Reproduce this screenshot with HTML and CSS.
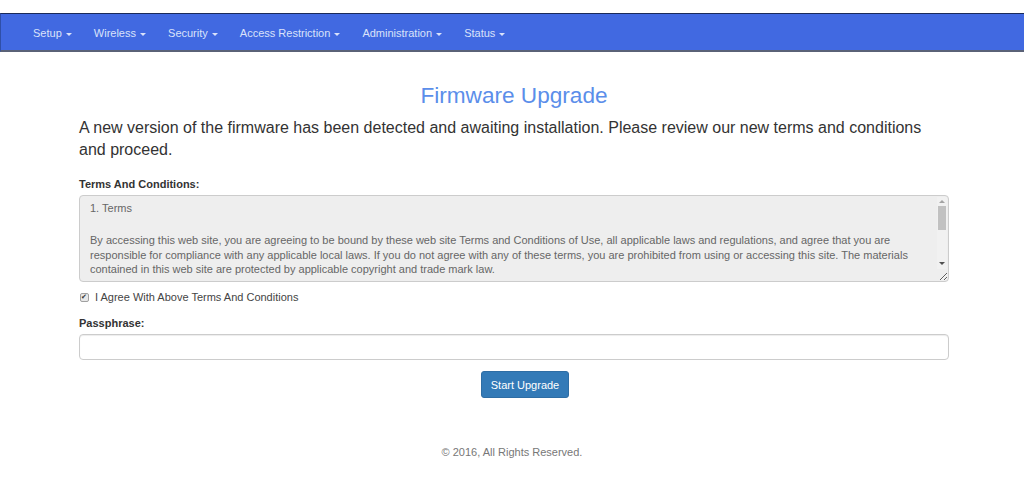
FILE: index.html
```html
<!DOCTYPE html>
<html lang="en">
<head>
    <meta charset="UTF-8">
    <title>Firmware Upgrade</title>
    <link rel="stylesheet" href="styles.css">
</head>
<body>
    <nav class="navbar">
        <ul class="nav">
            <li><a href="#">Setup <span class="caret"></span></a></li>
            <li><a href="#">Wireless <span class="caret"></span></a></li>
            <li><a href="#">Security <span class="caret"></span></a></li>
            <li><a href="#">Access Restriction <span class="caret"></span></a></li>
            <li><a href="#">Administration <span class="caret"></span></a></li>
            <li><a href="#">Status <span class="caret"></span></a></li>
        </ul>
    </nav>

    <div class="container">
        <h1 class="title">Firmware Upgrade</h1>
        <p class="lead">A new version of the firmware has been detected and awaiting installation. Please review our new terms and conditions and proceed.</p>

        <form class="upgrade-form">
            <label class="field-label">Terms And Conditions:</label>
            <div class="terms-box">
                <div class="terms">
                    <p class="terms-heading">1. Terms</p>
                    <p>By accessing this web site, you are agreeing to be bound by these web site Terms and Conditions of Use, all applicable laws and regulations, and agree that you are responsible for compliance with any applicable local laws. If you do not agree with any of these terms, you are prohibited from using or accessing this site. The materials contained in this web site are protected by applicable copyright and trade mark law.</p>
                </div>
                <!-- scrollbar drawn over the terms box -->
                <div class="scrollbar">
                    <span class="arrow-up"></span>
                    <span class="thumb"></span>
                    <span class="arrow-down"></span>
                </div>
            </div>

            <label class="agree">
                <input type="checkbox" checked> I Agree With Above Terms And Conditions
            </label>

            <label class="field-label" for="passphrase">Passphrase:</label>
            <input type="password" id="passphrase" class="form-control">

            <div class="actions">
                <button type="submit" class="btn-primary">Start Upgrade</button>
            </div>
        </form>
    </div>

    <footer class="footer">&copy; 2016, All Rights Reserved.</footer>
</body>
</html>
```

FILE: styles.css
```css
body {
    font-family: "Liberation Sans", Arial, sans-serif;
    font-size: 11px;
    color: #333;
    background-color: #fff;
    margin: 0;
    padding-top: 13px;
}
.navbar {
    background-color: #4169e1;
    border-top: 1px solid #1a2a5a;
    border-bottom: 2px solid #5a6277;
    border-left: 1px solid #2f4fa8;
    height: 36px;
}
.nav {
    list-style: none;
    margin: 0;
    padding: 0 0 0 21px;
    display: flex;
}
.nav a {
    display: block;
    padding: 13px 11px 11px;
    font-size: 11px;
    line-height: 12px;
    color: #dae2fa;
    text-decoration: none;
}
.caret {
    display: inline-block;
    width: 0;
    height: 0;
    margin-left: 1px;
    vertical-align: middle;
    border-top: 3px solid #dae2fa;
    border-left: 3px solid transparent;
    border-right: 3px solid transparent;
}
.container {
    width: 870px;
    margin: 0 0 0 79px;
}
.title {
    font-size: 22.6px;
    font-weight: normal;
    color: #5b8eea;
    text-align: center;
    margin: 31px 0 8px;
    line-height: 26px;
}
.lead {
    font-size: 16px;
    line-height: 22px;
    margin: 0 0 17px;
}
.upgrade-form {
    display: flex;
    flex-direction: column;
}
.field-label {
    font-weight: bold;
    font-size: 11px;
    margin-bottom: 5px;
}
.terms-box {
    position: relative;
    display: flex;
}
.terms {
    flex: 1;
    box-sizing: border-box;
    height: 87px;
    padding: 5px 22px 0 10px;
    font-size: 11px;
    line-height: 14.5px;
    color: #666;
    background-color: #eee;
    border: 1px solid #ccc;
    border-radius: 4px;
    overflow: hidden;
    resize: vertical;
}
.terms p {
    margin: 0;
}
.terms .terms-heading {
    margin-bottom: 17.5px;
}
.scrollbar {
    position: absolute;
    top: 2px;
    right: 2px;
    width: 10px;
    height: 72px;
    background-color: #f1f1f1;
}
.arrow-up,
.arrow-down {
    position: absolute;
    left: 2px;
    width: 0;
    height: 0;
    border-left: 3px solid transparent;
    border-right: 3px solid transparent;
}
.arrow-up {
    top: 3px;
    border-bottom: 3px solid #a3a3a3;
}
.arrow-down {
    bottom: 4px;
    border-top: 3px solid #505050;
}
.thumb {
    position: absolute;
    top: 9px;
    left: 1px;
    width: 8px;
    height: 24px;
    background-color: #c1c1c1;
}
.agree {
    display: flex;
    align-items: center;
    margin: 9px 0 14px 1px;
    color: #444;
}
.agree input {
    appearance: none;
    position: relative;
    box-sizing: border-box;
    width: 9px;
    height: 9px;
    margin: 0 6px 0 0;
    background-color: #e8e8e8;
    border: 1px solid #a0a0a0;
    border-radius: 2px;
}
.agree input:checked::after {
    content: "\2714";
    position: absolute;
    top: -2px;
    left: 0;
    font-size: 7px;
    line-height: 9px;
    color: #333;
}
.form-control {
    box-sizing: border-box;
    height: 26px;
    padding: 4px 10px;
    border: 1px solid #ccc;
    border-radius: 4px;
    box-shadow: inset 0 1px 1px rgba(0, 0, 0, 0.075);
}
.actions {
    text-align: center;
    margin: 11px 0 0 22px;
}
.btn-primary {
    font-family: "Liberation Sans", Arial, sans-serif;
    font-size: 11px;
    color: #fff;
    background-color: #337ab7;
    border: 1px solid #2e6da4;
    border-radius: 3px;
    height: 27px;
    padding: 0 9px;
    cursor: pointer;
}
.footer {
    text-align: center;
    color: #777;
    margin-top: 48px;
}
```
